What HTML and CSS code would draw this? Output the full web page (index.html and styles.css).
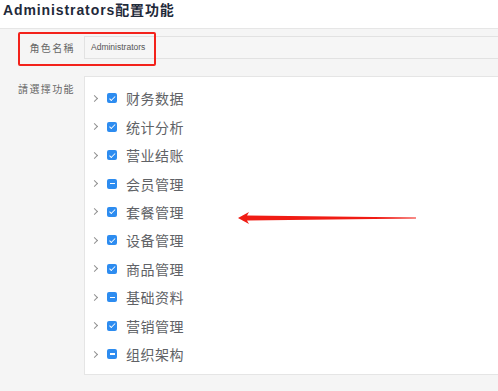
FILE: index.html
```html
<!DOCTYPE html>
<html>
<head>
<meta charset="utf-8">
<link rel="stylesheet" href="styles.css">
</head>
<body>
<div class="page">
  <div class="header"><h1 class="title">Administrators配置功能</h1></div>
  <div class="main">
    <div class="form-row">
      <div class="label">角色名稱</div>
      <div class="input">Administrators</div>
    </div>
    <div class="form-row tree-row">
      <div class="label">請選擇功能</div>
      <div class="tree">
        <div class="node"><span class="chev"></span><span class="cb checked"></span><span class="name">财务数据</span></div>
        <div class="node"><span class="chev"></span><span class="cb checked"></span><span class="name">统计分析</span></div>
        <div class="node"><span class="chev"></span><span class="cb checked"></span><span class="name">营业结账</span></div>
        <div class="node"><span class="chev"></span><span class="cb partial"></span><span class="name">会员管理</span></div>
        <div class="node"><span class="chev"></span><span class="cb checked"></span><span class="name">套餐管理</span></div>
        <div class="node"><span class="chev"></span><span class="cb checked"></span><span class="name">设备管理</span></div>
        <div class="node"><span class="chev"></span><span class="cb checked"></span><span class="name">商品管理</span></div>
        <div class="node"><span class="chev"></span><span class="cb partial"></span><span class="name">基础资料</span></div>
        <div class="node"><span class="chev"></span><span class="cb checked"></span><span class="name">营销管理</span></div>
        <div class="node"><span class="chev"></span><span class="cb partial"></span><span class="name">组织架构</span></div>
      </div>
    </div>
  </div>
  <div class="red-box"></div>
  <svg class="red-arrow" width="182" height="16" viewBox="0 0 182 16">
    <path d="M0 8 L11 2 L9 5.6 L178 7.5 L178 8.4 L9 10.6 L11 14 Z" fill="#f01c14"/>
  </svg>
</div>
</body>
</html>
```
FILE: styles.css
```css
html, body {
  margin: 0;
  padding: 0;
  background: #f5f5f5;
}
body {
  overflow: hidden;
  font-family: "Liberation Sans", "Noto Sans CJK SC", sans-serif;
}
.page {
  position: relative;
  width: 498px;
  height: 391px;
  overflow: hidden;
}
.header {
  height: 28px;
  background: #fff;
  padding-left: 3px;
}
.title {
  margin: 0;
  font-size: 14px;
  line-height: 20px;
  font-weight: bold;
  letter-spacing: 0.9px;
  color: #1f2a3a;
  font-family: "Liberation Sans", "Noto Sans CJK SC", sans-serif;
}
.main {
  border-top: 1px solid #e6e6e6;
  background: #f5f5f5;
  padding-top: 7px;
  height: 362px;
}
.form-row {
  display: flex;
  align-items: center;
}
.label {
  width: 75px;
  flex: none;
  text-align: right;
  font-family: "Noto Sans CJK SC", sans-serif;
  font-size: 10px;
  letter-spacing: 1.4px;
  color: #666;
  margin-right: 9px;
}
.input {
  flex: 1;
  height: 21px;
  border: 1px solid #e2e2e2;
  border-right: none;
  background: #f6f6f6;
  font-size: 8.5px;
  line-height: 21px;
  padding-left: 6px;
  color: #555;
  margin-right: -2px;
}
.tree-row {
  margin-top: 17px;
  align-items: flex-start;
}
.tree-row .label {
  padding-top: 5px;
}
.tree {
  flex: 1;
  background: #fff;
  border: 1px solid #e5e5e5;
  border-right: none;
  padding: 7px 0 6px 7px;
}
.node {
  display: flex;
  align-items: center;
  height: 28.44px;
}
.chev {
  width: 4px;
  height: 4px;
  border-right: 1.2px solid #909090;
  border-top: 1.2px solid #909090;
  transform: rotate(45deg);
  margin-right: 10px;
}
.cb {
  position: relative;
  width: 10px;
  height: 10px;
  border-radius: 2px;
  background: #2d8cf0;
  margin-right: 9px;
  flex: none;
}
.cb.checked::after {
  content: "";
  position: absolute;
  left: 3.5px;
  top: 1.5px;
  width: 2px;
  height: 4.5px;
  border-right: 1.4px solid #fff;
  border-bottom: 1.4px solid #fff;
  transform: rotate(45deg);
}
.cb.partial::after {
  content: "";
  position: absolute;
  left: 2.5px;
  top: 4.3px;
  width: 5px;
  height: 1.5px;
  background: #fff;
}
.name {
  font-family: "Noto Sans CJK SC", sans-serif;
  font-size: 14px;
  letter-spacing: 0.5px;
  color: #606266;
  line-height: 20px;
}
.red-box {
  position: absolute;
  left: 18px;
  top: 32px;
  width: 134px;
  height: 30px;
  border: 2px solid #f3221b;
  border-radius: 2px;
}
.red-arrow {
  position: absolute;
  left: 238px;
  top: 210px;
}
```
